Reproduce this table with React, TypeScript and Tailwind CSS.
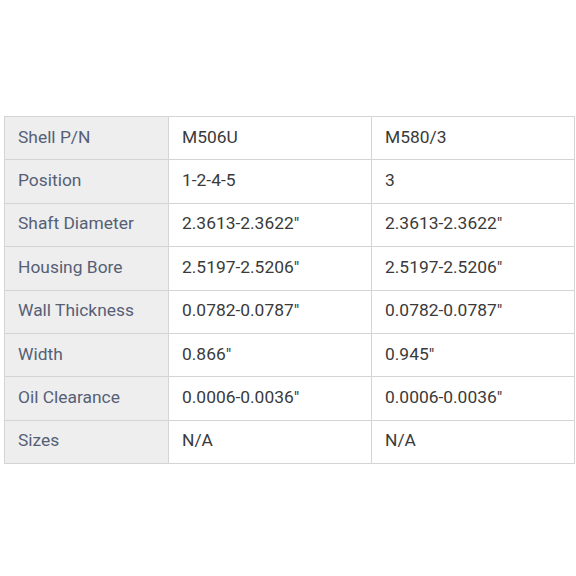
const rows: [string, string, string][] = [
  ['Shell P/N', 'M506U', 'M580/3'],
  ['Position', '1-2-4-5', '3'],
  ['Shaft Diameter', '2.3613-2.3622"', '2.3613-2.3622"'],
  ['Housing Bore', '2.5197-2.5206"', '2.5197-2.5206"'],
  ['Wall Thickness', '0.0782-0.0787"', '0.0782-0.0787"'],
  ['Width', '0.866"', '0.945"'],
  ['Oil Clearance', '0.0006-0.0036"', '0.0006-0.0036"'],
  ['Sizes', 'N/A', 'N/A'],
];

export default function App() {
  return (
    <div className="w-[576px] h-[576px] bg-white pt-[116px] pl-[4px] font-['Roboto',sans-serif]">
      <table className="border-collapse w-[570px] table-fixed text-[17.4px]">
        <colgroup>
          <col className="w-[164px]" />
          <col className="w-[203px]" />
          <col className="w-[203px]" />
        </colgroup>
        <tbody>
          {rows.map(([label, a, b]) => (
            <tr key={label} className="h-[43.4px]">
              <th className="border border-[#d4d4d4] bg-[#eeeeef] text-left font-normal text-[#566075] pl-[13px] pb-[3px]">
                {label}
              </th>
              <td className="border border-[#d4d4d4] text-[#3a3a3a] pl-[13px] pb-[3px]">{a}</td>
              <td className="border border-[#d4d4d4] text-[#3a3a3a] pl-[13px] pb-[3px]">{b}</td>
            </tr>
          ))}
        </tbody>
      </table>
    </div>
  );
}
